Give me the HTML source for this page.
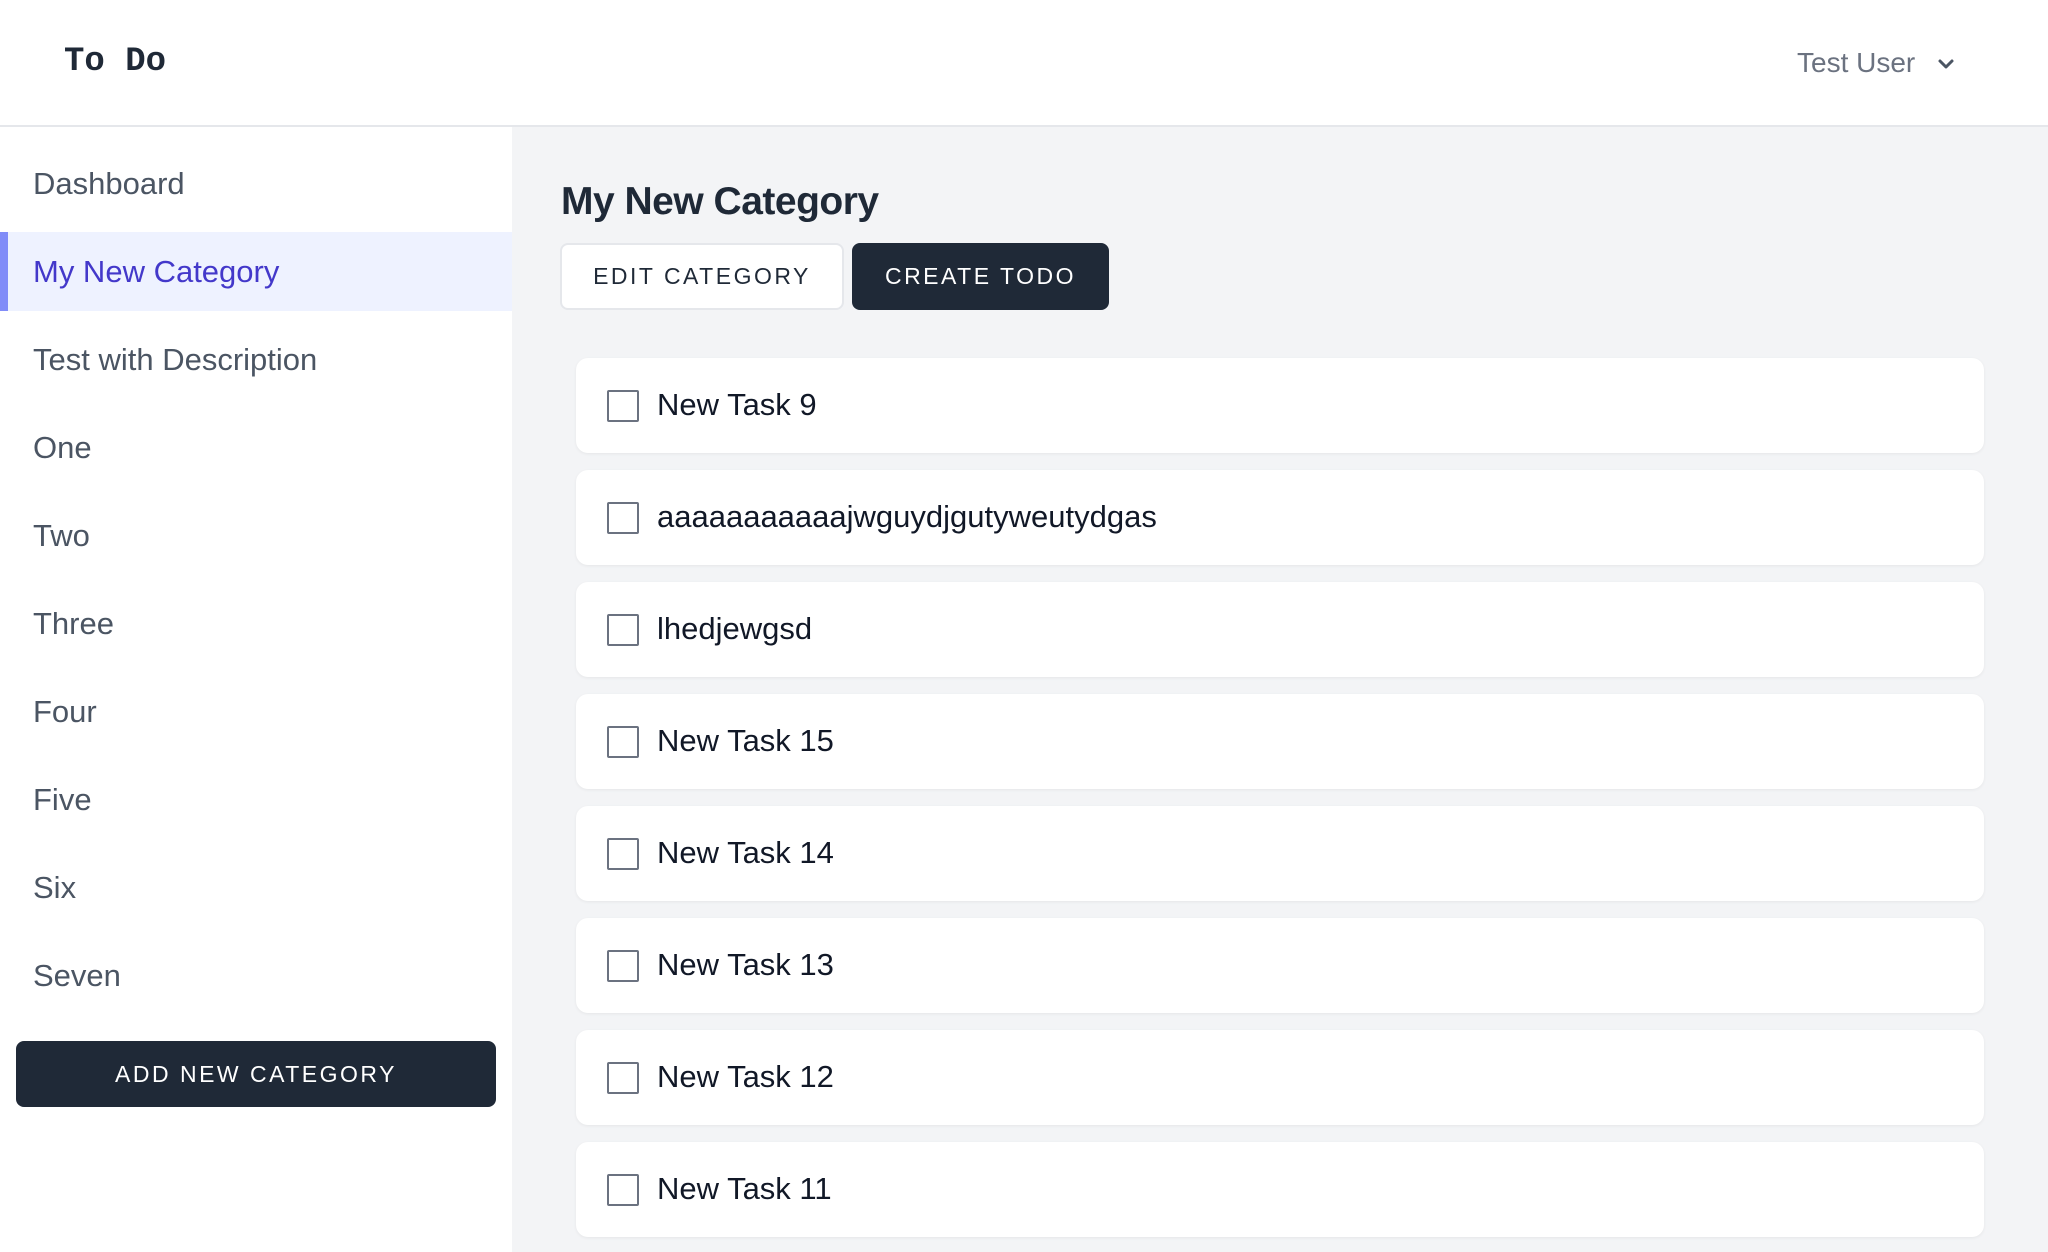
<!DOCTYPE html>
<html><head><meta charset="utf-8"><style>
*{box-sizing:border-box;margin:0;padding:0}
body{width:2048px;height:1252px;overflow:hidden;font-family:"Liberation Sans",sans-serif;background:#f3f4f6;position:relative}
.hdr{position:absolute;left:0;top:0;width:2048px;height:127px;background:#fff;border-bottom:2px solid #e5e7eb}
.logo{position:absolute;left:64px;top:43px;font-family:"Liberation Mono",monospace;font-weight:bold;font-size:34px;color:#1f2937}
.user{position:absolute;left:1797px;top:47px;font-size:28px;color:#6b7280}
.chev{position:absolute;left:1936px;top:54px}
.side{position:absolute;left:0;top:127px;width:512px;height:1125px;background:#fff}
.item{position:absolute;left:33px;font-size:31px;color:#4b5563;line-height:40px}
.active{position:absolute;left:0;top:105px;width:512px;height:79px;background:#eef2ff;border-left:8px solid #818cf8}
.addbtn{position:absolute;left:16px;top:1041px;width:480px;height:66px;background:#1f2937;border-radius:8px;color:#fff;font-size:23px;letter-spacing:2.5px;text-align:center;line-height:66px}
h1{position:absolute;left:561px;top:180px;font-size:39px;font-weight:bold;color:#1f2937;letter-spacing:-0.5px}
.btn{position:absolute;top:243px;height:67px;border-radius:8px;font-size:23px;letter-spacing:2.5px;text-align:center;line-height:63px}
.card{position:absolute;left:576px;width:1408px;height:95px;background:#fff;border-radius:12px;box-shadow:0 1px 3px rgba(0,0,0,.06)}
.cb{position:absolute;left:31px;top:32px;width:32px;height:32px;border:2px solid #6b7280;border-radius:2px;background:#fff}
.ct{position:absolute;left:81px;top:27px;font-size:31px;color:#111827;line-height:40px}
</style></head><body>
<div class="hdr"><div class="logo">To Do</div><div class="user">Test User</div>
<svg class="chev" width="20" height="20" viewBox="0 0 20 20"><path d="M4 7l6 6 6-6" fill="none" stroke="#4b5563" stroke-width="3" stroke-linecap="round" stroke-linejoin="round"/></svg></div>
<div class="side">
<div class="active"></div>
<div class="item" style="top:37px">Dashboard</div>
<div class="item" style="top:125px;color:#4338ca">My New Category</div>
<div class="item" style="top:213px">Test with Description</div>
<div class="item" style="top:301px">One</div>
<div class="item" style="top:389px">Two</div>
<div class="item" style="top:477px">Three</div>
<div class="item" style="top:565px">Four</div>
<div class="item" style="top:653px">Five</div>
<div class="item" style="top:741px">Six</div>
<div class="item" style="top:829px">Seven</div>
</div>
<div class="addbtn">ADD NEW CATEGORY</div>
<h1>My New Category</h1>
<div class="btn" style="left:560px;width:284px;background:#fff;border:2px solid #e5e7eb;color:#1f2937">EDIT CATEGORY</div>
<div class="btn" style="left:852px;width:257px;background:#1f2937;color:#fff;line-height:67px">CREATE TODO</div>
<div class="card" style="top:358px"><div class="cb"></div><div class="ct">New Task 9</div></div>
<div class="card" style="top:470px"><div class="cb"></div><div class="ct">aaaaaaaaaaajwguydjgutyweutydgas</div></div>
<div class="card" style="top:582px"><div class="cb"></div><div class="ct">lhedjewgsd</div></div>
<div class="card" style="top:694px"><div class="cb"></div><div class="ct">New Task 15</div></div>
<div class="card" style="top:806px"><div class="cb"></div><div class="ct">New Task 14</div></div>
<div class="card" style="top:918px"><div class="cb"></div><div class="ct">New Task 13</div></div>
<div class="card" style="top:1030px"><div class="cb"></div><div class="ct">New Task 12</div></div>
<div class="card" style="top:1142px"><div class="cb"></div><div class="ct">New Task 11</div></div>
</body></html>
